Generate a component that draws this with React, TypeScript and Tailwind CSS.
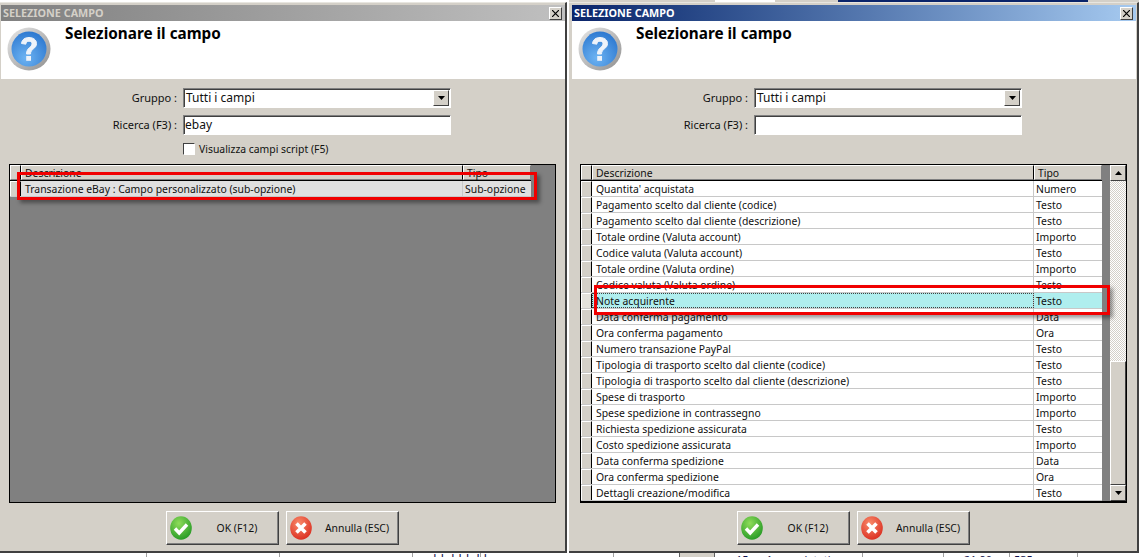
import { useId } from "react";

type Row = { desc: string; tipo: string };

const rows: Row[] = [
  { desc: "Quantita' acquistata", tipo: "Numero" },
  { desc: "Pagamento scelto dal cliente (codice)", tipo: "Testo" },
  { desc: "Pagamento scelto dal cliente (descrizione)", tipo: "Testo" },
  { desc: "Totale ordine (Valuta account)", tipo: "Importo" },
  { desc: "Codice valuta (Valuta account)", tipo: "Testo" },
  { desc: "Totale ordine (Valuta ordine)", tipo: "Importo" },
  { desc: "Codice valuta (Valuta ordine)", tipo: "Testo" },
  { desc: "Note acquirente", tipo: "Testo" },
  { desc: "Data conferma pagamento", tipo: "Data" },
  { desc: "Ora conferma pagamento", tipo: "Ora" },
  { desc: "Numero transazione PayPal", tipo: "Testo" },
  { desc: "Tipologia di trasporto scelto dal cliente (codice)", tipo: "Testo" },
  { desc: "Tipologia di trasporto scelto dal cliente (descrizione)", tipo: "Testo" },
  { desc: "Spese di trasporto", tipo: "Importo" },
  { desc: "Spese spedizione in contrassegno", tipo: "Importo" },
  { desc: "Richiesta spedizione assicurata", tipo: "Testo" },
  { desc: "Costo spedizione assicurata", tipo: "Importo" },
  { desc: "Data conferma spedizione", tipo: "Data" },
  { desc: "Ora conferma spedizione", tipo: "Ora" },
  { desc: "Dettagli creazione/modifica", tipo: "Testo" },
];

function HelpIcon() {
  const id = useId();
  return (
    <svg width="44" height="44" viewBox="0 0 44 44">
      <defs>
        <linearGradient id={id + "r"} x1="0" y1="0" x2="1" y2="1">
          <stop offset="0" stopColor="#e8e8e8" />
          <stop offset="1" stopColor="#8f8f8f" />
        </linearGradient>
        <radialGradient id={id + "b"} cx="0.4" cy="0.75" r="0.8">
          <stop offset="0" stopColor="#6db3f2" />
          <stop offset="1" stopColor="#2a76cf" />
        </radialGradient>
      </defs>
      <circle cx="22" cy="22" r="21.5" fill={"url(#" + id + "r)"} />
      <circle cx="22" cy="22" r="17.5" fill={"url(#" + id + "b)"} />
      <path d="M14.5 16.5c.5-4 3.5-6 7.5-6s7.5 2.2 7.5 6c0 5.5-6 5-6 10.5h-4c0-6.5 5.5-6.5 5.5-10.2 0-1.6-1.3-2.6-3-2.6s-3 1-3.2 3z" fill="#eef3fa" stroke="#eef3fa" strokeWidth="1" />
      <rect x="19.2" y="29" width="4.8" height="4.8" fill="#eef3fa" />
    </svg>
  );
}

function OkIcon() {
  return (
    <svg width="22" height="24" viewBox="0 0 22 24">
      <defs>
        <radialGradient id="okg" cx="0.4" cy="0.3" r="0.8">
          <stop offset="0" stopColor="#8fdc5a" />
          <stop offset="1" stopColor="#1c9420" />
        </radialGradient>
      </defs>
      <ellipse cx="11" cy="12" rx="10.8" ry="11.8" fill="url(#okg)" />
      <path d="M5 12.5l4.2 4.5L17 8.5" fill="none" stroke="#fff" strokeWidth="3.4" />
    </svg>
  );
}

function CancelIcon() {
  return (
    <svg width="22" height="24" viewBox="0 0 22 24">
      <defs>
        <radialGradient id="cag" cx="0.4" cy="0.3" r="0.8">
          <stop offset="0" stopColor="#f98a6a" />
          <stop offset="1" stopColor="#d8261a" />
        </radialGradient>
      </defs>
      <ellipse cx="11" cy="12" rx="10.8" ry="11.8" fill="url(#cag)" />
      <path d="M6.5 7.5l9 9M15.5 7.5l-9 9" fill="none" stroke="#fff" strokeWidth="3.6" />
    </svg>
  );
}

function Arrow({ up }: { up?: boolean }) {
  return (
    <svg width="7" height="4" viewBox="0 0 7 4">
      <path d={up ? "M3.5 0L7 4H0z" : "M0 0h7L3.5 4z"} fill="#000" />
    </svg>
  );
}

function ArrowButton({ up }: { up?: boolean }) {
  return (
    <div className="flex h-[16px] w-[16px] items-center justify-center border border-t-white border-l-white border-r-[#404040] border-b-[#404040] bg-[#d4d0c8]">
      <Arrow up={up} />
    </div>
  );
}

function HeaderCells() {
  const cell = "flex h-[15px] items-center border border-t-white border-l-white border-r-[#808080] border-b-[#808080] bg-[#d4d0c8] pl-[3px]";
  return (
    <div className="grid h-[16px] w-[521px] grid-cols-[11px_442px_68px] border-b border-black">
      <div className={cell + " border-r-black"} />
      <div className={cell + " border-r-black"}>Descrizione</div>
      <div className={cell + " pl-[1px]"}>Tipo</div>
    </div>
  );
}

function TableRow({ row, tone }: { row: Row; tone?: "selected" | "current" }) {
  const bg = tone === "selected" ? "bg-[#e0e0e0]" : tone === "current" ? "bg-[#afeeee]" : "bg-white";
  const focus = tone === "current" ? "outline-1 -outline-offset-1 outline-dotted outline-[#404040]" : "";
  return (
    <div className="grid h-[16px] w-[521px] grid-cols-[11px_442px_68px] border-b border-[#c8c8c8]">
      <div className={"border-t border-l border-t-white border-l-white border-r border-r-black " + (tone === "current" ? "bg-[#e4e2dc]" : "bg-[#d4d0c8]")} />
      <div className={"flex items-center border-r border-[#c8c8c8] pl-[4px] " + bg + " " + focus}>{row.desc}</div>
      <div className={"flex items-center pl-[2px] " + bg}>{row.tipo}</div>
    </div>
  );
}

function Scrollbar() {
  return (
    <div className="ml-[8px] flex h-full w-[17px] flex-col">
      <ArrowButton up />
      <div className="h-[180px] bg-[repeating-conic-gradient(#d4d0c8_0_25%,#fff_0_50%)] bg-[length:2px_2px]" />
      <div className="flex-1 border border-t-white border-l-white border-r-[#404040] border-b-[#404040] bg-[#d4d0c8]" />
      <ArrowButton />
    </div>
  );
}

function Dialog({
  active,
  search,
  showScriptOption,
  children,
  className,
}: {
  active?: boolean;
  search: string;
  showScriptOption?: boolean;
  children: React.ReactNode;
  className: string;
}) {
  return (
    <div className={"flex h-full shrink-0 flex-col border-r-2 border-b-2 border-r-[#404040] border-b-[#404040] border-t border-t-[#e8e6e0] bg-[#d4d0c8] pt-[2px] " + className}>
      <div className={"flex h-[16px] w-[564px] items-center justify-between pl-[2px] pr-[3px] text-[10.8px] font-bold " + (active ? "bg-gradient-to-r from-[#0a246a] to-[#a6caf0] text-white" : "bg-gradient-to-r from-[#808080] to-[#c0c0c0] text-[#d4d0c8]")}>
        <span>SELEZIONE CAMPO</span>
        <div className="flex h-[13px] w-[13px] items-center justify-center border border-t-white border-l-white border-r-[#404040] border-b-[#404040] bg-[#d4d0c8] text-black">
          <svg width="7" height="7" viewBox="0 0 7 7">
            <path d="M0 0l7 7M7 0L0 7" stroke="#000" strokeWidth="1.2" />
          </svg>
        </div>
      </div>
      <div className="flex h-[58px] w-[564px] items-start gap-[14px] bg-white pl-[6px] pt-[6px]">
        <HelpIcon />
        <div className="-mt-[4px] text-[15.3px] font-bold leading-[20px] text-black">Selezionare il campo</div>
      </div>
      <div className="flex w-[564px] flex-col pt-[9px]">
        <div className="grid grid-cols-[177px_268px] items-center gap-x-[5px] gap-y-[7px]">
          <div className="pr-[1px] text-right text-[11px]">Gruppo :</div>
          <div className="flex h-[20px] items-center justify-between border border-t-[#808080] border-l-[#808080] border-r-white border-b-white bg-white pl-[2px] pr-[1px] shadow-[inset_1px_1px_0_#404040] text-[12px]">
            <span>Tutti i campi</span>
            <div className="flex h-[16px] w-[16px] items-center justify-center border border-t-white border-l-white border-r-[#404040] border-b-[#404040] bg-[#d4d0c8]">
              <Arrow />
            </div>
          </div>
          <div className="pr-[1px] text-right text-[11px]">Ricerca (F3) :</div>
          <div className="flex h-[20px] items-center border border-t-[#808080] border-l-[#808080] border-r-white border-b-white bg-white pl-[1px] shadow-[inset_1px_1px_0_#404040] text-[12px]">
            {search}
          </div>
        </div>
        <div className="ml-[182px] mt-[8px] flex h-[12px] items-center gap-[4px]">
          {showScriptOption && (
            <>
              <div className="h-[12px] w-[12px] border border-t-[#404040] border-l-[#404040] border-r-white border-b-white bg-white" />
              <span>Visualizza campi script (F5)</span>
            </>
          )}
        </div>
        {children}
        <div className="ml-[165px] mt-[8px] flex gap-[7px]">
          <DialogButton icon={<OkIcon />} label="OK (F12)" />
          <DialogButton icon={<CancelIcon />} label="Annulla (ESC)" />
        </div>
      </div>
    </div>
  );
}

function DialogButton({ icon, label }: { icon: React.ReactNode; label: string }) {
  return (
    <div className="flex h-[34px] w-[113px] items-center border border-t-white border-l-white border-r-[#404040] border-b-[#404040] bg-[#d4d0c8] pl-[3px] shadow-[inset_-1px_-1px_0_#808080]">
      {icon}
      <span className="flex-1 pl-[4px] text-center">{label}</span>
    </div>
  );
}

function TopStrip() {
  return (
    <div className="flex h-[2px] shrink-0">
      <div className="w-[569px] bg-white" />
      <div className="w-[146px] bg-[#d4d0c8]" />
      <div className="w-[60px] bg-white" />
      <div className="w-[63px] bg-[#d4d0c8]" />
      <div className="w-[250px] bg-[#0a246a]" />
      <div className="flex-1 bg-[#d4d0c8]" />
    </div>
  );
}

function BottomStrip() {
  const cell = "h-full shrink-0 border-r border-[#a0a0a0]";
  return (
    <div className="flex h-[4px] shrink-0 overflow-hidden bg-white text-[11px] leading-[13px] text-[#10104a]">
      <div className={cell + " w-[147px]"} />
      <div className={cell + " w-[133px]"} />
      <div className={cell + " w-[133px] "} />
      <div className={cell + " w-[68px] pl-[16px] text-[12px] whitespace-nowrap"}>dd ddd dd</div>
      <div className={cell + " w-[133px]"} />
      <div className="h-full w-[65px] shrink-0" />
      <div className="flex h-full w-[36px] shrink-0 border-x border-[#606060] bg-[#d4d0c8]" />
      <div className={cell + " w-[148px] pl-[21px] whitespace-nowrap"}>15 su 1 completati</div>
      <div className={cell + " w-[81px]"} />
      <div className={cell + " w-[66px] pl-[20px] whitespace-nowrap"}>21,90</div>
      <div className={cell + " w-[68px] pl-[4px]"}>535</div>
    </div>
  );
}

export default function App() {
  return (
    <div className="flex h-[557px] w-[1139px] flex-col overflow-hidden bg-white font-['Noto_Sans',sans-serif] text-[10.4px] leading-[14px] text-[#101010]">
      <TopStrip />
      <div className="flex h-[551px] shrink-0">
        <Dialog search="ebay" showScriptOption className="w-[567px] pl-[1px]">
          <div className="relative ml-[8px] mt-[9px] flex h-[339px] w-[547px] items-start border border-black bg-[#808080]">
            <div className="flex flex-col">
              <HeaderCells />
              <TableRow row={{ desc: "Transazione eBay : Campo personalizzato (sub-opzione)", tipo: "Sub-opzione" }} tone="selected" />
            </div>
            <div className="absolute left-[7px] top-[7px] h-[28px] w-[520px] border-[3px] border-[#f00000] shadow-[3px_3px_4px_rgba(0,0,0,0.4)]" />
          </div>
        </Dialog>
        <div className="w-[2px] shrink-0 bg-white" />
        <Dialog active search="" className="w-[570px] pl-[3px]">
          <div className="relative ml-[8px] mt-[9px] flex h-[339px] w-[547px] items-start border border-b-2 border-black bg-[#808080]">
            <div className="flex flex-col">
              <HeaderCells />
              {rows.map((r) => (
                <TableRow key={r.desc} row={r} tone={r.desc === "Note acquirente" ? "current" : undefined} />
              ))}
            </div>
            <Scrollbar />
            <div className="absolute left-[13px] top-[120px] h-[30px] w-[516px] border-[3px] border-[#f00000] shadow-[3px_3px_4px_rgba(0,0,0,0.4)]" />
          </div>
        </Dialog>
      </div>
      <BottomStrip />
    </div>
  );
}
